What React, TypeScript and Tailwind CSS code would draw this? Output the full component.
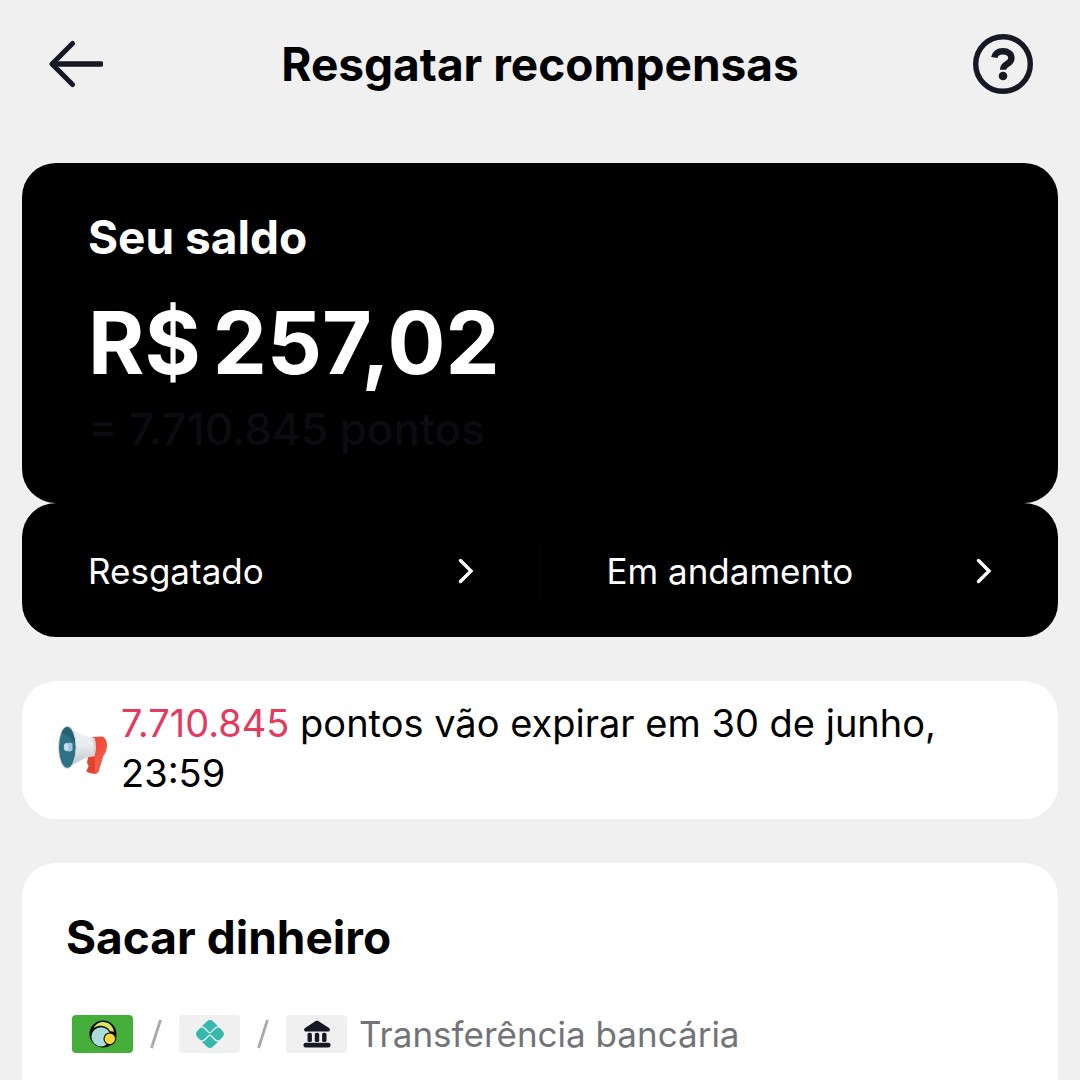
import React from "react";
import { FaPix } from "react-icons/fa6";

function BackIcon() {
  return (
    <svg viewBox="0 0 56 48" className="h-12 w-14" fill="none" stroke="#161823" strokeWidth="5" aria-hidden="true">
      <path d="M25.500 3.500 5 24l20.500 20.500" strokeLinecap="round" strokeLinejoin="round" />
      <path d="M6 24h48" strokeWidth="5.500" strokeLinecap="round" />
    </svg>
  );
}

function HelpIcon() {
  return (
    <svg viewBox="0 0 60 60" className="size-[60px]" fill="none" stroke="#161823" aria-hidden="true">
      <circle cx="30" cy="30" r="27.300" strokeWidth="5.400" />
      <path d="M21.300 23.500C22 19.500 25.500 17.300 29.800 17.300c5 0 8.600 2.500 8.600 6.700 0 3-1.700 4.600-4.400 6.100-2.900 1.600-3.900 2.800-3.900 5.700" strokeWidth="6.400" />
      <circle cx="30" cy="42" r="4.300" fill="#161823" stroke="none" />
    </svg>
  );
}

function Chevron() {
  return (
    <svg viewBox="0 0 16 26" className="h-[26px] w-4" fill="none" stroke="#fff" strokeWidth="3.400" aria-hidden="true">
      <path d="M2.500 2.500 13 13 2.500 23.500" strokeLinecap="round" strokeLinejoin="miter" />
    </svg>
  );
}

function Megaphone() {
  return (
    <svg viewBox="0 0 50 50" className="size-[50px] shrink-0" aria-hidden="true">
      <defs>
        <linearGradient id="cone" x1="0" y1="0" x2="0" y2="1">
          <stop offset="0" stopColor="#eef1f3" />
          <stop offset="0.450" stopColor="#e9ecee" />
          <stop offset="1" stopColor="#b9bfc5" />
        </linearGradient>
        <linearGradient id="grip" x1="0" y1="0" x2="1" y2="1">
          <stop offset="0" stopColor="#ea4632" />
          <stop offset="1" stopColor="#f65c46" />
        </linearGradient>
      </defs>
      <path d="M31 28 46 27 40.500 46c-.8 2-2.400 3-4.300 2.800-2.800-.3-6.200-1.300-8-2.600l2.400-5-1.600-3.500z" fill="#e2432f" />
      <path d="M37 30 46.500 27.500 40.700 46c-.7 1.800-2 2.600-3.700 2.600z" fill="#f25a45" />
      <path d="M34 12 44.500 11.500c3.500 1.500 5.200 6.500 4.300 11.500-.6 3.800-2 7-4.300 8L34 32z" fill="url(#grip)" />
      <path d="M9 1C15 4 21 10.500 36.500 13c1.600 5.500 1.600 12.500 0 18C26 33 18 37 10 43.500z" fill="url(#cone)" />
      <path d="M34 12.600c2 5.500 2 13.400 0 19l2.500-.5c1.600-5.800 1.600-12.500 0-18.100z" fill="#cfd4d8" />
      <ellipse cx="9.300" cy="22.300" rx="8.800" ry="21" fill="#2d7184" stroke="#d9dfe2" strokeWidth="1" />
      <path d="M4 8c1.200-3 2.700-5 4.600-5.500C13 4 16.500 10 17.300 18 13 12 8 9 4 8z" fill="#255f72" />
      <path d="M7.500 18.500c2-1 5.500-1 7 .3v6.400c-1.500 1.500-5 1.600-7 .6z" fill="#a9c6de" />
      <ellipse cx="8" cy="22" rx="2.200" ry="3.700" fill="#c9dcec" />
    </svg>
  );
}

function WalletLogo() {
  return (
    <svg viewBox="0 0 28 28" className="size-7" aria-hidden="true">
      <circle cx="14" cy="14" r="13.500" fill="#0a0a0a" />
      <path d="M4.500 8.500C6.300 4.500 9.800 2 14 2c5.700 0 10.300 4.200 11 9.800-1.200-.6-2.600-.8-4-.6C18.500 6 9.500 3.500 4.500 8.500z" fill="#dbe364" />
      <circle cx="12" cy="16.800" r="9.600" fill="#a9dbda" />
      <circle cx="20.800" cy="18.800" r="5.800" fill="#fbd63c" stroke="#0a0a0a" strokeWidth="1.100" />
    </svg>
  );
}

function BankIcon() {
  return (
    <svg viewBox="0 0 28 28" className="size-7" fill="#161823" aria-hidden="true">
      <path d="M12.700 1c.8-.5 1.800-.5 2.600 0L26 8c1.600 1.200.9 3.600-1 3.600H3c-1.900 0-2.600-2.400-1-3.600z" />
      <rect x="4.500" y="12.800" width="4.400" height="9.200" rx="1.600" />
      <rect x="11.800" y="12.800" width="4.400" height="9.200" rx="1.600" />
      <rect x="19.100" y="12.800" width="4.400" height="9.200" rx="1.600" />
      <rect x="0.500" y="22.800" width="27" height="4.600" rx="2" />
    </svg>
  );
}

function Slash() {
  return (
    <svg viewBox="0 0 12 30" className="h-[30px] w-3 shrink-0" stroke="#a9a9ac" strokeWidth="2.800" aria-hidden="true">
      <path d="M10.500 1 1.500 29" />
    </svg>
  );
}

function Badge({ className, children }: { className: string; children: React.ReactNode }) {
  return (
    <span className={`flex h-[38px] w-[61px] shrink-0 items-center justify-center rounded ${className}`}>{children}</span>
  );
}

function HistoryLink({ label }: { label: string }) {
  return (
    <a href="#" className="flex flex-1 items-center justify-between px-[66px]">
      <span className="text-[35px] leading-[48px]">{label}</span>
      <Chevron />
    </a>
  );
}

export default function App() {
  return (
    <div className="flex min-h-screen flex-col bg-[#f0f0f0] px-[22px] font-['Inter',sans-serif] text-black">
      <header className="flex h-32 items-center justify-between px-[25px]">
        <button type="button" aria-label="Voltar" className="flex w-[62px]">
          <BackIcon />
        </button>
        <h1 className="text-[46px] leading-[60px] font-bold">Resgatar recompensas</h1>
        <button type="button" aria-label="Ajuda" className="flex w-[62px] justify-end">
          <HelpIcon />
        </button>
      </header>

      <main className="flex flex-1 flex-col pt-[35px]">
        <section className="h-[340px] rounded-[34px] bg-black px-[66px] pt-11 text-white">
          <h2 className="text-[46px] leading-[60px] font-bold">Seu saldo</h2>
          <p className="mt-5 flex gap-3 text-[86px] leading-[112px] font-bold">
            <span>R$</span>
            <span>257,02</span>
          </p>
          <p className="text-[44px] leading-[60px] font-medium text-[#0b0b12]">= 7.710.845 pontos</p>
        </section>

        <nav className="flex h-[134px] items-center rounded-[34px] bg-black pt-[2px] text-white">
          <HistoryLink label="Resgatado" />
          <span className="h-14 w-px bg-[#050508]" />
          <HistoryLink label="Em andamento" />
        </nav>

        <section className="mt-11 flex items-center gap-[13px] rounded-[34px] bg-white px-9 py-[17px]">
          <Megaphone />
          <p className="pb-1 text-[38px] leading-[50px]">
            <span className="text-[#e5395f]">7.710.845</span> pontos vão expirar em 30 de junho, 23:59
          </p>
        </section>

        <section className="mt-11 flex-1 rounded-t-[34px] bg-white px-11 pt-11">
          <h2 className="text-[46px] leading-[60px] font-bold">Sacar dinheiro</h2>
          <div className="mt-[43px] flex items-center gap-3 pl-[6px]">
            <div className="flex items-center gap-[17px]">
              <Badge className="bg-[#45ad3a]">
                <WalletLogo />
              </Badge>
              <Slash />
              <Badge className="bg-[#f0f0f0]">
                <FaPix className="size-7 text-[#36b9ac]" aria-label="Pix" />
              </Badge>
              <Slash />
              <Badge className="bg-[#f0f0f0]">
                <BankIcon />
              </Badge>
            </div>
            <span className="text-[35px] leading-[48px] text-[#737479]">Transferência bancária</span>
          </div>
        </section>
      </main>
    </div>
  );
}
